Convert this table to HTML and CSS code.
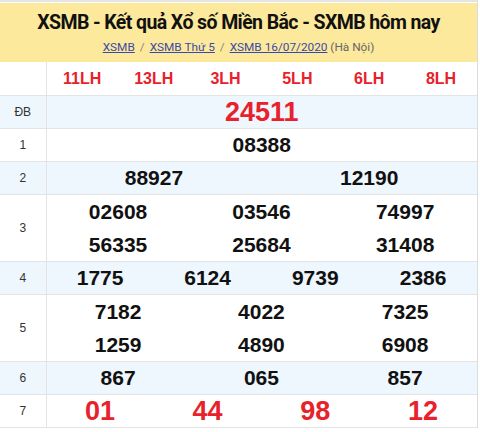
FILE: index.html
```html
<!DOCTYPE html>
<html lang="vi">
<head>
<meta charset="utf-8">
<title>XSMB</title>
<link rel="stylesheet" href="styles.css">
</head>
<body>
<div class="box">
  <header class="head">
    <h1 class="title">XSMB - Kết quả Xổ số Miền Bắc - SXMB hôm nay</h1>
    <nav class="crumbs"><a href="#">XSMB</a><span class="sep">/</span><a href="#">XSMB Thứ 5</a><span class="sep">/</span><a href="#">XSMB 16/07/2020</a> <span class="place">(Hà Nội)</span></nav>
  </header>
  <table class="kq">
    <colgroup>
      <col class="c-label">
      <col><col><col><col><col><col><col><col><col><col><col><col>
    </colgroup>
    <tr class="row-code">
      <td class="lbl"></td>
      <td colspan="2">11LH</td><td colspan="2">13LH</td><td colspan="2">3LH</td>
      <td colspan="2">5LH</td><td colspan="2">6LH</td><td colspan="2">8LH</td>
    </tr>
    <tr class="alt">
      <td class="lbl">ĐB</td>
      <td colspan="12" class="db">24511</td>
    </tr>
    <tr>
      <td class="lbl">1</td>
      <td colspan="12" class="num">08388</td>
    </tr>
    <tr class="alt">
      <td class="lbl">2</td>
      <td colspan="6" class="num">88927</td><td colspan="6" class="num">12190</td>
    </tr>
    <tr class="dbl">
      <td class="lbl">3</td>
      <td colspan="4" class="num"><div>02608</div><div>56335</div></td>
      <td colspan="4" class="num"><div>03546</div><div>25684</div></td>
      <td colspan="4" class="num"><div>74997</div><div>31408</div></td>
    </tr>
    <tr class="alt">
      <td class="lbl">4</td>
      <td colspan="3" class="num">1775</td><td colspan="3" class="num">6124</td>
      <td colspan="3" class="num">9739</td><td colspan="3" class="num">2386</td>
    </tr>
    <tr class="dbl">
      <td class="lbl">5</td>
      <td colspan="4" class="num"><div>7182</div><div>1259</div></td>
      <td colspan="4" class="num"><div>4022</div><div>4890</div></td>
      <td colspan="4" class="num"><div>7325</div><div>6908</div></td>
    </tr>
    <tr class="alt">
      <td class="lbl">6</td>
      <td colspan="4" class="num">867</td><td colspan="4" class="num">065</td><td colspan="4" class="num">857</td>
    </tr>
    <tr>
      <td class="lbl">7</td>
      <td colspan="3" class="red">01</td><td colspan="3" class="red">44</td>
      <td colspan="3" class="red">98</td><td colspan="3" class="red">12</td>
    </tr>
  </table>
</div>
</body>
</html>
```

FILE: styles.css
```css
html, body {
  margin: 0;
  padding: 0;
  background: #fff;
}
.box {
  width: 477px;
  border-top: 2px solid #e4e4e4;
  border-right: 1px solid #dcdcdc;
  margin-top: 0;
  padding-top: 1px;
  background: #fff;
}
.head {
  background: #fde99b;
  height: 59px;
  display: flex;
  flex-direction: column;
  align-items: center;
  box-sizing: border-box;
  padding-top: 7px;
}
.title {
  margin: 0;
  font-family: Roboto, "Liberation Sans", sans-serif;
  font-weight: 700;
  font-size: 19.5px;
  letter-spacing: -0.6px;
  line-height: 26px;
  color: #111;
}
.crumbs {
  font-family: Roboto, "Liberation Sans", sans-serif;
  font-size: 11.8px;
  line-height: 18px;
  margin-top: 2px;
  color: #666;
}
.crumbs a {
  color: #3949ab;
  text-decoration: underline;
}
.sep {
  color: #888;
  margin: 0 5px;
}
.kq {
  width: 477px;
  border-collapse: collapse;
  table-layout: fixed;
  font-family: "Liberation Sans", Arial, sans-serif;
}
.c-label {
  width: 46px;
}
.kq td {
  border-bottom: 1px solid #e3e3e3;
  text-align: center;
  padding: 0;
  height: 32px;
  color: #111;
  font-weight: 700;
  font-size: 21px;
}
.kq td.lbl {
  border-right: 1px solid #e3e3e3;
  font-weight: 400;
  font-size: 12px;
  color: #333;
}
.alt td {
  background: #eef6fe;
}
.row-code td {
  height: 33px;
  color: #e8212b;
  font-size: 16px;
}
.db {
  color: #e8212b !important;
  font-size: 27px !important;
}
.red {
  color: #e8212b !important;
  font-size: 27px !important;
}
.dbl td.num div {
  height: 33px;
  line-height: 33px;
}
.dbl td {
  height: 66px;
}
```
